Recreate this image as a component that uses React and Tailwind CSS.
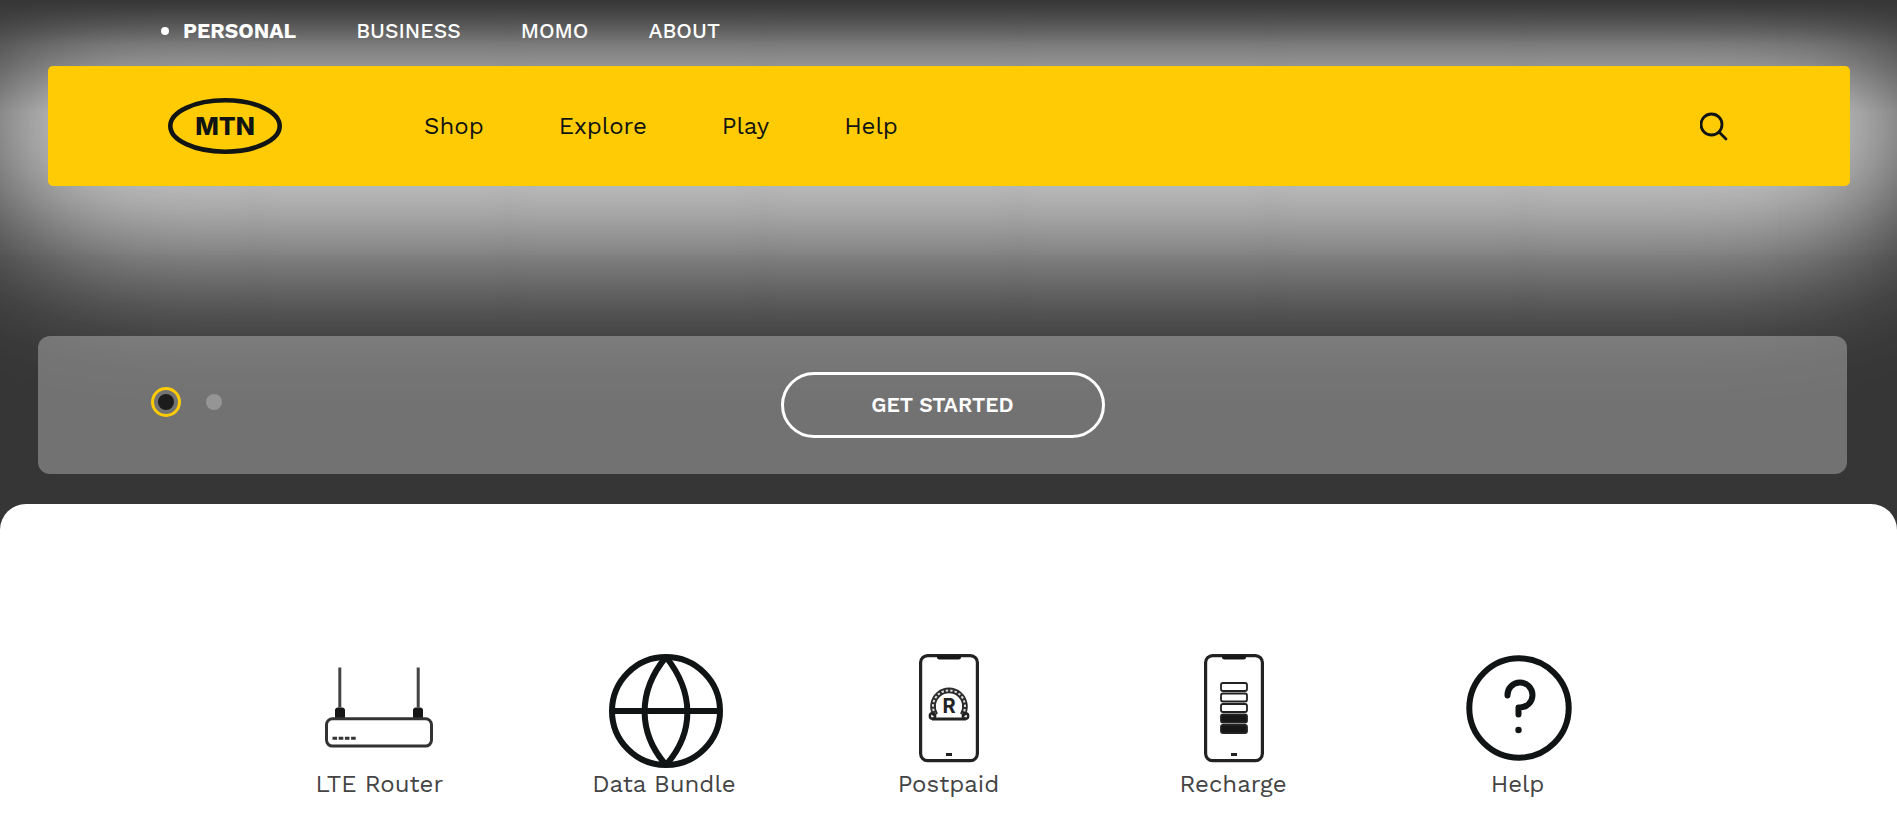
import { useState } from 'react';

const segments = ['PERSONAL', 'BUSINESS', 'MOMO', 'ABOUT'];
const menu = ['Shop', 'Explore', 'Play', 'Help'];

function Logo() {
  return (
    <svg viewBox="0 0 114 56" className="w-[114px] h-[56px]" role="img" aria-label="MTN">
      <ellipse cx="57" cy="28" rx="54.7" ry="25.7" fill="none" stroke="#111414" strokeWidth="4.6" />
      <text x="57" y="37" textAnchor="middle" fontFamily="Inter, sans-serif" fontWeight="800" fontSize="25" fill="#111414">MTN</text>
    </svg>
  );
}

function RouterIcon() {
  return (
    <svg viewBox="0 0 108 114" className="w-[108px] h-[114px]" fill="none" stroke="#333">
      <path d="M14.8 13.5v40M93.2 13.5v40" strokeWidth="3" stroke="#444" />
      <rect x="10.5" y="54" width="9" height="11" rx="2" fill="#161616" stroke="#161616" />
      <rect x="88.5" y="54" width="9" height="11" rx="2" fill="#161616" stroke="#161616" />
      <rect x="1.5" y="64.7" width="105" height="27.4" rx="6" strokeWidth="3" />
      <path d="M7.5 84.3h24" strokeWidth="3" strokeDasharray="4.6 1.6" />
    </svg>
  );
}

function GlobeIcon() {
  return (
    <svg viewBox="-5 0 119 114" className="w-[119px] h-[114px]" fill="none" stroke="#111414" strokeWidth="6">
      <circle cx="57" cy="57" r="54" />
      <path d="M3 57h108" />
      <path d="M57 3C28 38 29 79 57 111M57 3c28 35 29 75 0 108" />
    </svg>
  );
}

function Phone({ children }) {
  return (
    <svg viewBox="-1 0 61 114" className="w-[61px] h-[114px]" fill="none" stroke="#222">
      <rect x="1.6" y="1.6" width="56.8" height="105" rx="7" strokeWidth="3.2" />
      <path d="M18 1.5h24v1.5a2.5 2.5 0 0 1-2.5 2.5h-19a2.5 2.5 0 0 1-2.5-2.5z" fill="#161616" stroke="none" />
      <path d="M27 100.5h6" strokeWidth="3" />
      {children}
    </svg>
  );
}

function PostpaidIcon() {
  return (
    <Phone>
      <path d="M16.5 61A16 16 0 1 1 43.5 61" strokeWidth="5.6" stroke="#2b2b2b" />
      <path d="M16.5 61A16 16 0 1 1 43.5 61" strokeWidth="2" stroke="#ddd" strokeDasharray="2.4 2" />
      <path d="M13 65h34" strokeWidth="3" />
      <circle cx="13.5" cy="62" r="2.7" strokeWidth="2.4" />
      <circle cx="46.5" cy="62" r="2.7" strokeWidth="2.4" />
      <text x="30" y="58.5" textAnchor="middle" fontFamily="Inter, sans-serif" fontWeight="700" fontSize="20" fill="#222" stroke="none">R</text>
    </Phone>
  );
}

function RechargeIcon() {
  return (
    <Phone>
      {[29, 39.5, 50, 60.5, 71].map((y, i) => (
        <rect key={y} x="17" y={y} width="26" height="8" rx="2" strokeWidth="1.8" fill={i > 2 ? '#161616' : 'none'} />
      ))}
    </Phone>
  );
}

function HelpIcon() {
  return (
    <svg viewBox="-2 0 108 114" className="w-[108px] h-[114px]" fill="none" stroke="#111414" strokeWidth="6">
      <circle cx="53" cy="54" r="49.7" />
      <path d="M41.5 41.5a12.5 12.5 0 1 1 12 12h-1v7" strokeLinecap="round" strokeLinejoin="round" />
      <circle cx="52.5" cy="76" r="3.2" fill="#111414" stroke="none" />
    </svg>
  );
}

const services = [
  { label: 'LTE Router', Icon: RouterIcon },
  { label: 'Data Bundle', Icon: GlobeIcon },
  { label: 'Postpaid', Icon: PostpaidIcon },
  { label: 'Recharge', Icon: RechargeIcon },
  { label: 'Help', Icon: HelpIcon },
];

export default function App() {
  const [segment, setSegment] = useState('PERSONAL');
  const [slide, setSlide] = useState(0);

  return (
    <div className="min-h-screen flex flex-col relative overflow-hidden bg-[#363636] font-['Work_Sans','Inter',sans-serif]">
      {/* Glow behind the menu bar, faded out towards the top edge */}
      <div className="absolute inset-x-14 top-[80px] h-[92px] rounded-[90px/46px] shadow-[0_0_130px_86px_rgba(255,255,255,0.74)]"></div>
      <div className="absolute inset-x-0 top-0 h-28 bg-linear-to-b from-[#363636] via-[#363636]/40 via-40% to-[#363636]/0"></div>

      <nav className="relative h-[66px] pl-[161px] pb-1 flex items-center gap-[60px] text-[21px] font-medium text-white">
        {segments.map((name) => (
          <a
            key={name}
            href="#"
            onClick={() => setSegment(name)}
            className={name === segment ? 'flex items-center gap-[14px] font-bold' : ''}
          >
            {name === segment && <span className="w-2 h-2 rounded-full bg-white"></span>}
            {name}
          </a>
        ))}
      </nav>

      <header className="relative ml-12 mr-[47px] h-[120px] px-30 flex items-center rounded-[5px] bg-[#ffcb05] text-[#111414]">
        <a href="#"><Logo /></a>
        <nav className="ml-[142px] flex gap-[75px] text-2xl">
          {menu.map((item) => (
            <a key={item} href="#">{item}</a>
          ))}
        </nav>
        <button type="button" aria-label="Search" className="ml-auto">
          <svg viewBox="0 0 30 30" className="w-[30px] h-[30px]" fill="none" stroke="#111414" strokeWidth="2.8" strokeLinecap="round">
            <circle cx="11.5" cy="13.5" r="10.5" />
            <path d="M19 21l7 7" />
          </svg>
        </button>
      </header>

      <section className="relative mt-[150px] mb-[30px] ml-[38px] mr-[50px] h-[138px] px-[113px] grid grid-cols-[1fr_auto_1fr] items-center rounded-xl bg-white/30">
        <div className="pb-1.5 flex items-center gap-[18px]">
          {[0, 1].map((i) => (
            <button
              key={i}
              type="button"
              aria-label={`Slide ${i + 1}`}
              onClick={() => setSlide(i)}
              className={
                i === slide
                  ? 'w-[30px] h-[30px] flex items-center justify-center rounded-full border-3 border-[#ffcb05]'
                  : 'w-[30px] h-[30px] flex items-center justify-center'
              }
            >
              <span className={i === slide ? 'w-4 h-4 rounded-full bg-[#1c1c1c]' : 'w-4 h-4 rounded-full bg-[#959595]'}></span>
            </button>
          ))}
        </div>
        <button type="button" className="w-[324px] h-[66px] rounded-full border-3 border-white text-[21px] font-semibold text-white">
          GET STARTED
        </button>
      </section>

      <main className="relative flex-1 pt-[150px] rounded-t-[26px] bg-white">
        <div className="w-3/4 mx-auto grid grid-cols-5">
          {services.map(({ label, Icon }) => (
            <a key={label} href="#" className="flex flex-col items-center text-2xl text-[#444]">
              <Icon />
              <span>{label}</span>
            </a>
          ))}
        </div>
      </main>
    </div>
  );
}
